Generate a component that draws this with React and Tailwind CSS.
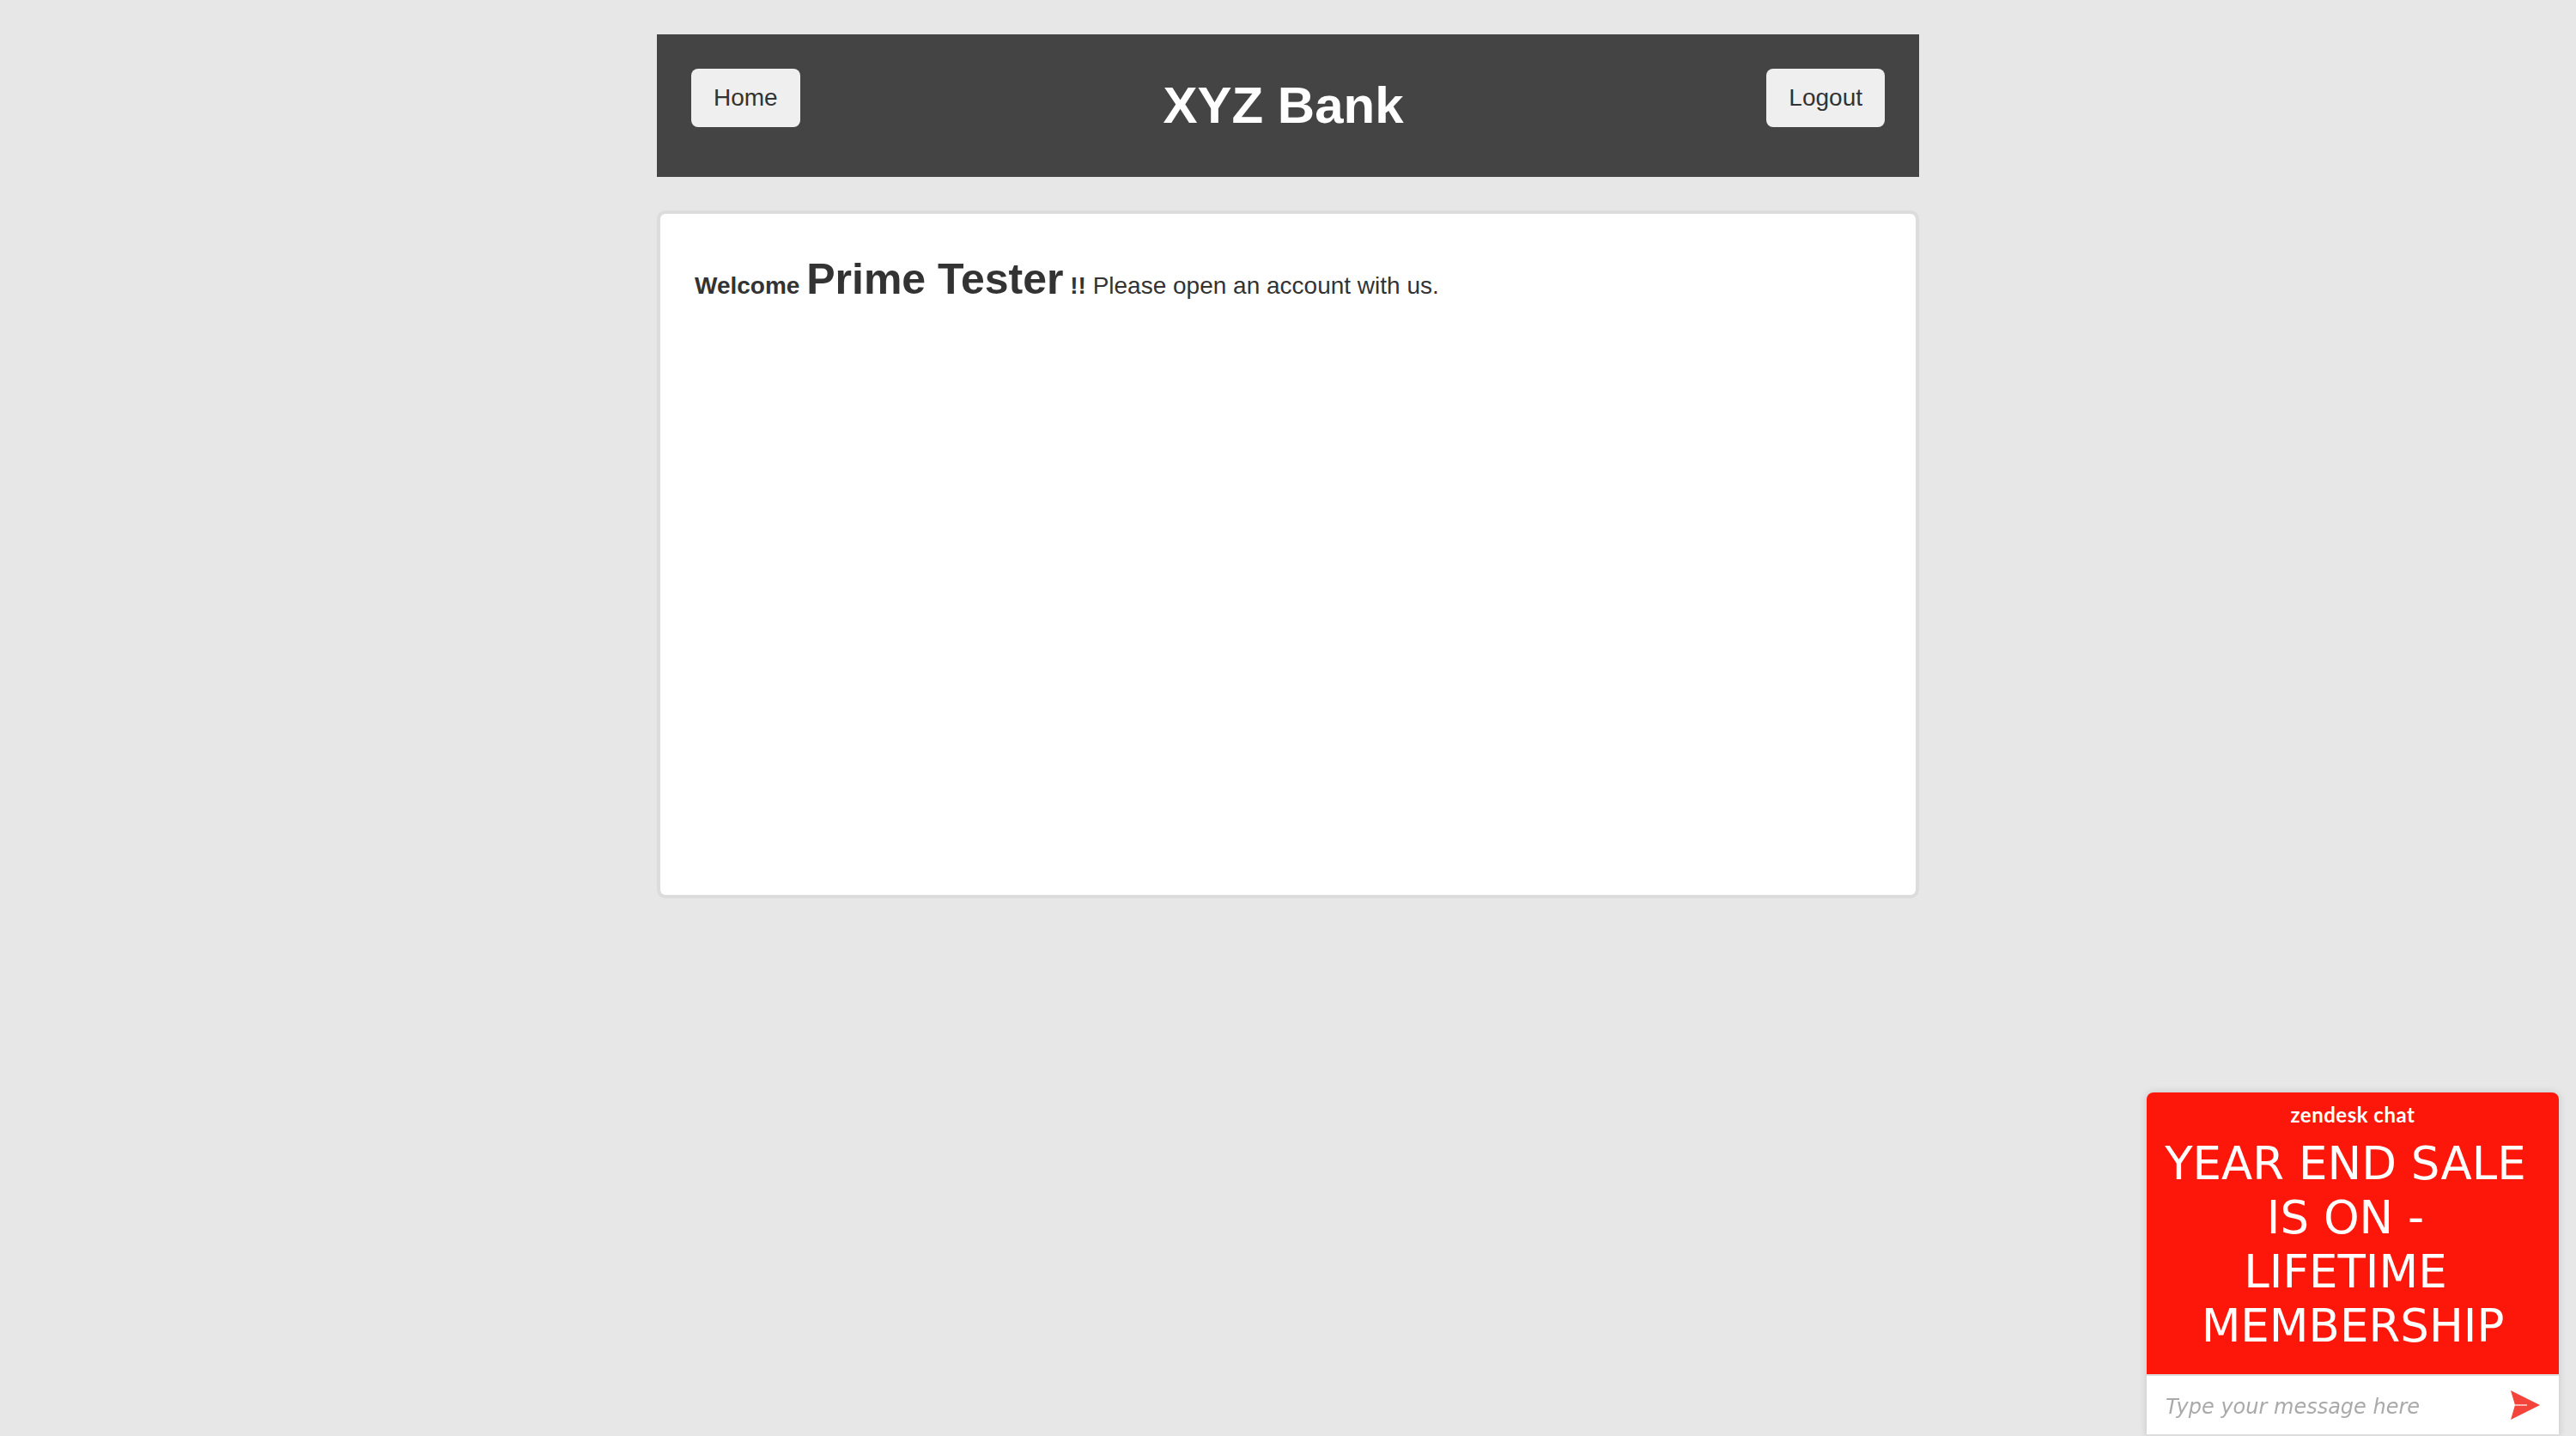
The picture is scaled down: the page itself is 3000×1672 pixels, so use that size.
export default function App() {
  return (
    <div className="min-h-screen w-full bg-[#e7e7e7] text-[#333333] font-['Liberation_Sans',Arial,sans-serif]">
      <div className="mx-auto w-[1470px] pt-[40px]">
        <header className="flex h-[166px] items-start bg-[#444444] px-[40px]">
          <button className="mt-[40px] rounded-[8px] bg-[#efefef] px-[26px] py-[18px] text-[28px] leading-[1.149] text-[#333333]">
            Home
          </button>
          <h1 className="flex-1 self-center text-center text-[60px] font-bold leading-[1.149] text-white">
            XYZ Bank
          </h1>
          <button className="mt-[40px] rounded-[8px] bg-[#efefef] px-[26px] py-[18px] text-[28px] leading-[1.149] text-[#333333]">
            Logout
          </button>
        </header>

        <main className="mt-[39px] h-[801px] rounded-[10px] border-4 border-[#dcdcdc] bg-white px-[40px] pt-[48px]">
          <p className="text-[28px] leading-[1.149]">
            <b>Welcome</b> <span className="text-[50px] font-bold">Prime Tester</span> <b>!!</b> Please open an account with us.
          </p>
        </main>
      </div>

      <div className="fixed bottom-0 right-[20px] w-[480px] overflow-hidden rounded-t-[8px] shadow-[0_0_10px_rgba(0,0,0,0.15)]">
        <div className="h-[328px] bg-[#fc170a] pt-[12px] text-center text-white">
          <div className="font-['Lato',sans-serif] text-[24px] font-bold leading-[1.2] tracking-[0.5px]">
            zendesk chat
          </div>
          <div className="mt-[10px] font-['DejaVu_Sans',Verdana,sans-serif] text-[53px] leading-[63px]">
            <div className="pr-[17px]">YEAR END SALE</div>
            <div className="pr-[17px]">IS ON -</div>
            <div className="pr-[17px]">LIFETIME</div>
            <div>MEMBERSHIP</div>
          </div>
        </div>
        <div className="flex h-[72px] items-center border-y-2 border-[#dddddd] bg-white pl-[22px] pr-[22px]">
          <input
            type="text"
            placeholder="Type your message here"
            className="mt-[4px] min-w-0 flex-1 bg-transparent font-['DejaVu_Sans',Verdana,sans-serif] text-[24px] italic text-[#555] outline-none placeholder:italic placeholder:text-[#aaaaaa]"
          />
          <svg width="34" height="34" viewBox="0 0 34 34" className="shrink-0">
            <polygon points="0,0 34,17 0,34 5,17" fill="#f4433b" />
            <line x1="5" y1="17" x2="19" y2="17" stroke="#ffffff" strokeWidth="1.2" />
          </svg>
        </div>
      </div>
    </div>
  );
}
